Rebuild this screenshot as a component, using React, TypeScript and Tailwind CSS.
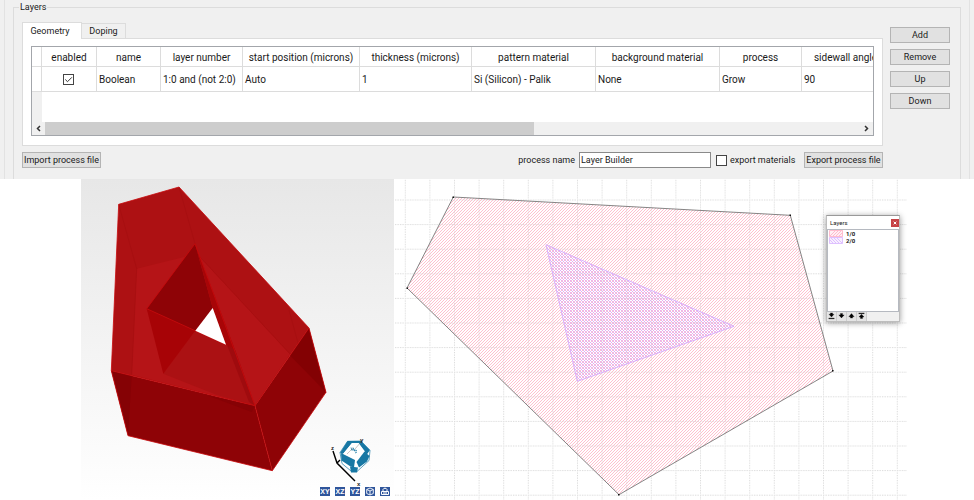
import React, { FC, ReactNode } from "react";
import { clsx } from "clsx";

interface Column {
  title: string;
  value: ReactNode;
  width: string;
}

const columns: Column[] = [
  { title: "name", value: "Boolean", width: "w-[64px]" },
  { title: "layer number", value: "1:0 and (not 2:0)", width: "w-[82px]" },
  { title: "start position (microns)", value: "Auto", width: "w-[117px]" },
  { title: "thickness (microns)", value: "1", width: "w-[112px]" },
  { title: "pattern material", value: "Si (Silicon) - Palik", width: "w-[124px]" },
  { title: "background material", value: "None", width: "w-[124px]" },
  { title: "process", value: "Grow", width: "w-[82px]" },
  { title: "sidewall angle", value: "90", width: "w-[88px]" },
];

const App = () => {
  return (
    <main className="w-full bg-white font-[Roboto,'Noto_Sans',sans-serif] text-[9px] leading-[14px] text-[#1a1a1a]">
      <LayerEditor />
      <div className="grid grid-cols-[81fr_313fr_513fr_67fr]">
        <div className="col-start-2 relative bg-linear-to-b from-[#e7e7e7] to-white">
          <Scene />
          <ViewButtons />
        </div>
        <div className="relative">
          <LayoutCanvas />
          <LayersWindow />
        </div>
      </div>
    </main>
  );
};

const LayerEditor = () => {
  return (
    <section className="bg-[#f0f0f0] px-1">
      <div className="border-x border-[#e2e2e2] px-2">
        <fieldset className="min-w-0 border border-b-0 border-[#dcdcdc] pb-[11px]">
          <legend className="ml-[5px] px-px">Layers</legend>
          <div className="flex gap-[7px] pt-2 pl-2 pr-2.5">
            <div className="min-w-0 grow">
              <div role="tablist" className="flex items-end">
                <button
                  role="tab"
                  aria-selected="true"
                  className="relative -mb-px h-[17px] w-[60px] border border-b-0 border-[#dcdcdc] bg-white pr-1"
                >
                  Geometry
                </button>
                <button
                  role="tab"
                  aria-selected="false"
                  className="h-[15px] w-11 border border-l-0 border-b-0 border-[#dcdcdc] leading-[13px]"
                >
                  Doping
                </button>
              </div>
              <div className="border border-[#dcdcdc] bg-white px-2 pt-[7px] pb-[9px]">
                <LayerTable />
              </div>
              <div className="mt-1.5 flex items-center">
                <PushButton className="w-[79px]">Import process file</PushButton>
                <label htmlFor="process-name" className="ml-auto mr-1">
                  process name
                </label>
                <input
                  id="process-name"
                  type="text"
                  defaultValue="Layer Builder"
                  className="h-4 w-[132px] border border-[#8a8a8a] bg-white px-px outline-none"
                />
                <label className="ml-[5px] mr-2 flex w-20 items-center gap-[3px] whitespace-nowrap">
                  <input
                    type="checkbox"
                    className="size-[11px] shrink-0 appearance-none border border-[#444] bg-white"
                  />
                  export materials
                </label>
                <PushButton className="w-[79px]">Export process file</PushButton>
              </div>
            </div>
            <div className="flex w-[60px] shrink-0 flex-col gap-1.5 pt-[5px]">
              <PushButton>Add</PushButton>
              <PushButton>Remove</PushButton>
              <PushButton>Up</PushButton>
              <PushButton>Down</PushButton>
            </div>
          </div>
        </fieldset>
      </div>
    </section>
  );
};

const PushButton: FC<{ className?: string; children: ReactNode }> = (props) => {
  return (
    <button
      className={clsx(
        "h-4 whitespace-nowrap border border-[#b4b4b4] bg-[#e1e1e1] text-center",
        props.className,
      )}
    >
      {props.children}
    </button>
  );
};

const LayerTable = () => {
  return (
    <div className="border border-[#a3a6ab]">
      <div className="overflow-hidden">
        <table className="w-max table-fixed border-separate border-spacing-0 whitespace-nowrap text-[10px]">
          <thead>
            <tr className="h-5">
              <th className="w-2.5 border-r border-b border-[#dcdcdc] p-0"></th>
              <th className="w-[55px] border-r border-b border-[#dcdcdc] px-0 pt-0.5 pb-0 font-normal">
                enabled
              </th>
              {columns.map((col) => (
                <th
                  key={col.title}
                  className={clsx(
                    "border-r border-b border-[#dcdcdc] px-0 pt-0.5 pb-0 font-normal",
                    col.width,
                  )}
                >
                  {col.title}
                </th>
              ))}
            </tr>
          </thead>
          <tbody>
            <tr className="h-[25px]">
              <td className="border-r border-b border-[#dcdcdc] p-0"></td>
              <td className="border-r border-b border-[#dcdcdc] py-0 pr-0.5 pl-0">
                <span className="relative mx-auto block size-[11px]">
                  <input
                    type="checkbox"
                    aria-label="enabled"
                    defaultChecked
                    className="block size-[11px] appearance-none border border-[#444] bg-white"
                  />
                  <svg
                    viewBox="0 0 11 11"
                    className="pointer-events-none absolute inset-0"
                    fill="none"
                    stroke="#333"
                  >
                    <path d="M2.3 5.5 4.5 7.7 8.9 3.3" />
                  </svg>
                </span>
              </td>
              {columns.map((col) => (
                <td
                  key={col.title}
                  className="border-r border-b border-[#dcdcdc] pt-0.5 pr-0 pb-0 pl-0.5"
                >
                  {col.value}
                </td>
              ))}
            </tr>
          </tbody>
        </table>
      </div>
      <div className="h-[30px]">
        <div className="h-full w-2.5 bg-[#f0f0f0]"></div>
      </div>
      <div className="flex h-[13px] bg-[#f0f0f0]">
        <ScrollArrow label="Scroll left" d="M8 4 5.5 6.5 8 9" />
        <div className="grow">
          <div className="h-full w-3/5 bg-[#cdcdcd]"></div>
        </div>
        <ScrollArrow label="Scroll right" d="M5 4 7.5 6.5 5 9" />
      </div>
    </div>
  );
};

const ScrollArrow: FC<{ label: string; d: string }> = (props) => {
  return (
    <button aria-label={props.label} className="size-[13px]">
      <svg viewBox="0 0 13 13" fill="none" stroke="#333" strokeWidth="1.5">
        <path d={props.d} />
      </svg>
    </button>
  );
};

const Scene = () => {
  return (
    <svg viewBox="0 0 313 321" className="block w-full">
      {/* extruded body */}
      <path d="M37.7 25.3 98 8 228 149 174 226.7 30.3 191.7Z" fill="#ad1113" />
      <path d="M55.7 89.7 107 77 119 78 209 175 174 226.7 50.7 195.7Z" fill="#b51417" />
      <path d="M30.3 191.7 174 226.7 191.3 291.7 47 256.7Z" fill="#8e0306" />
      <path d="M30.3 191.7 50.7 196.7 47 256.7Z" fill="#850205" />
      <path d="M174 226.7 228 149 245 213.3 191.3 291.7Z" fill="#8e0306" />
      <path d="M228 149 245 213.3 209 176.5Z" fill="#830103" />
      <path d="M128 217 174 226.7 170.7 233Z" fill="#860205" />
      <path
        d="M37.7 25.3 55.7 89.7 50.7 195.7M98 8 114 64.7M119 78 209 175M208 131 217 164"
        fill="none"
        stroke="#a30d0f"
        strokeWidth="0.6"
      />

      {/* triangular hole */}
      <path d="M114.3 151.7 154 170.7 174 226.7 136 216 82.3 194.7Z" fill="#ab1113" />
      <path d="M146 166 154 170.7 174 226.7 168 223Z" fill="#9f0b0e" />
      <path d="M65.7 129.7 114.3 151.7 82.3 194.7Z" fill="#a70306" />
      <path d="M114 64.7 65.7 129.7 114.3 151.7 131.7 129Z" fill="#8e0306" />
      <path d="M114 64.7 131.7 129 145 165.7 154 170.7Z" fill="#a80507" />

      <g fill="none" stroke="#c80a0c" strokeWidth="0.8">
        <path d="M37.7 25.3 98 8 228 149 245 213.3 191.3 291.7 47 256.7 30.3 191.7Z" />
        <path d="M30.3 191.7 174 226.7 228 149M174 226.7 191.3 291.7" />
        <path d="M174 226.7 114 64.7 65.7 129.7 145 165.7" />
      </g>
      <path d="M131.7 129 114.3 151.7 145 165.7Z" fill="#fff" />

      {/* orientation cube and axes */}
      <g strokeLinejoin="round">
        <path
          d="M266.5 262.3 280 262 289 271.5 288 281.5 276 292.5 270 292 261 284.5 259 273.5Z"
          fill="#fff"
          stroke="#1878a4"
          strokeWidth="0.7"
        />
        <path d="M266.5 262 280 262 289 271 285.5 276 277.5 264 271 264 262 275 259 274Z" fill="#1878a4" />
        <path d="M271 264 277.5 264 284 272.5 275 282.5 262 275Z" fill="#fff" />
        <path d="M260 274 274 281 273 288.5 269.5 287.5 260.5 281.5Z" fill="#1878a4" />
        <path d="M275.5 283 283.5 272.5 288.5 277 286 282.5 278 288.5Z" fill="#1878a4" />
        <path d="M269 287.5 277 288.5 276 293.5 270 293.5Z" fill="#1878a4" />
        <path
          d="M270 268.5 271 271.5M272 268.5 274 272.5M270 270.5 276 271.5M274 274 276 273"
          fill="none"
          stroke="#1878a4"
          strokeWidth="0.8"
        />
        <path d="M266 275 272 269M274 270 280 263" stroke="#888" strokeWidth="0.5" />
      </g>
      <path
        d="M252 272 256 284 274 302M256 284 259 281"
        fill="none"
        stroke="#000"
        strokeWidth="1.4"
      />
      <g fontSize="6" fontFamily="Liberation Sans, sans-serif" fontWeight="bold" fill="#222">
        <text x="250" y="271">z</text>
        <text x="279" y="263">y</text>
        <text x="276" y="307">x</text>
      </g>
    </svg>
  );
};

const viewButton =
  "flex h-[9px] w-2.5 items-center justify-center bg-[#2f559b] font-['Liberation_Sans',sans-serif] text-[7px] leading-none font-bold text-white";

const ViewButtons = () => {
  return (
    <div className="absolute right-1 bottom-1 flex gap-[5px]">
      <button className={viewButton}>XY</button>
      <button className={viewButton}>XZ</button>
      <button className={viewButton}>YZ</button>
      <button className={viewButton} aria-label="Perspective">
        <svg viewBox="0 0 10 9" fill="none" stroke="#fff" strokeWidth="0.9">
          <path d="M5 1 8.3 2.5V6.5L5 8 1.7 6.5V2.5ZM1.7 2.5 5 4 8.3 2.5M5 4V8" />
        </svg>
      </button>
      <button className={viewButton} aria-label="Lock">
        <svg viewBox="0 0 10 9" fill="none" stroke="#fff">
          <path d="M3 4V2.5L4 1.3H6L7 2.5V4M1.5 4.5H8.5V7.5H1.5ZM3 6H7" />
        </svg>
      </button>
    </div>
  );
};

const LayoutCanvas = () => {
  return (
    <svg viewBox="0 0 513 321" className="block w-full">
      <defs>
        <pattern
          id="grid"
          x="10.8"
          y="20.5"
          width="24.6"
          height="24.6"
          patternUnits="userSpaceOnUse"
        >
          <path
            d="M.5 0V24.6M0 .5H24.6"
            fill="none"
            stroke="#dadada"
            strokeDasharray="1.3 1.16"
          />
        </pattern>
        <pattern id="pink" width="3" height="3" patternUnits="userSpaceOnUse">
          <path
            d="M-1 1 1-1M-1 4 4-1M2 4 4 2"
            stroke="#ffb9ca"
            strokeWidth="0.9"
          />
        </pattern>
        <pattern id="purple" width="3" height="3" patternUnits="userSpaceOnUse">
          <path
            d="M2-1 4 1M-1-1 4 4M-1 2 1 4"
            stroke="#dba9f8"
            strokeWidth="0.9"
          />
        </pattern>
      </defs>
      <path d="M1 0H513V321H1Z" fill="url(#grid)" />
      <path d="M59.3 18 396.3 36.3 439 192 225 315.7 13 109Z" fill="url(#pink)" />
      <path
        d="M59.3 18 396.3 36.3 439 192 225 315.7 13 109Z"
        fill="none"
        stroke="#777"
        strokeWidth="0.9"
      />
      <path
        d="M152 65.7 340 147.3 183.3 202.3Z"
        fill="url(#purple)"
        stroke="#d9b0fb"
      />
      <path
        d="M58.5 17.5h1.5v1.5h-1.5ZM395.5 35.5h1.5v1.5h-1.5ZM438 191h1.5v1.5h-1.5ZM224 315h1.5v1.5h-1.5ZM12.5 108.5h1.5v1.5h-1.5Z"
        fill="#111"
      />
    </svg>
  );
};

const LayersWindow = () => {
  return (
    <div className="absolute top-9 right-[7px] flex h-[107px] w-[74px] flex-col border border-[#bdbdbd] border-t-[#999] bg-[#f0f0f0] text-[6px] leading-[7px] shadow-[0_1px_6px_rgba(0,0,0,0.4)]">
      <div className="flex h-[13px] items-center justify-between bg-white pl-[3px]">
        Layers
        <button aria-label="Close" className="size-2 bg-[#c64346]">
          <svg viewBox="0 0 8 8" stroke="#fff">
            <path d="M2.7 2.7 5.3 5.3M5.3 2.7 2.7 5.3" />
          </svg>
        </button>
      </div>
      <ul className="grow border border-[#b5b9c0] bg-white font-bold">
        <li className="flex items-center gap-[3px] pl-px">
          <svg viewBox="0 0 14 7" className="h-[7px] w-3.5">
            <path
              d="M.5 .5H13.5V6.5H.5ZM1 6 6 1M4 6 9 1M7 6 12 1M10 6 13 3"
              fill="#fff0f4"
              stroke="#ffadc3"
              strokeWidth="0.8"
            />
          </svg>
          1/0
        </li>
        <li className="flex items-center gap-[3px] pl-px">
          <svg viewBox="0 0 14 7" className="h-[7px] w-3.5">
            <path
              d="M.5 .5H13.5V6.5H.5ZM1 3 4 6M2 1 7 6M5 1 10 6M8 1 13 6"
              fill="#f8f0ff"
              stroke="#d7b3ff"
              strokeWidth="0.8"
            />
          </svg>
          2/0
        </li>
      </ul>
      <div className="flex h-[9px]">
        <OrderButton label="Move to bottom" d="M3.8 1H6.2V2.6H7.8L5 5.6 2.2 2.6H3.8ZM2 6.7H8V7.6H2Z" />
        <OrderButton label="Move down" d="M3.8 1.6H6.2V3.2H8L5 6.6 2 3.2H3.8Z" />
        <OrderButton label="Move up" d="M5 1.8 8 5.2H6.2V6.8H3.8V5.2H2Z" />
        <OrderButton label="Move to top" d="M2 1H8V1.9H2ZM5 2.5 7.8 5.5H6.2V7.2H3.8V5.5H2.2Z" />
      </div>
    </div>
  );
};

const OrderButton: FC<{ label: string; d: string }> = (props) => {
  return (
    <button
      aria-label={props.label}
      className="h-[9px] w-2.5 border-r border-[#ccc] bg-[#e4e4e4]"
    >
      <svg viewBox="0 0 10 9" fill="#000" stroke="#000" strokeWidth="0.3">
        <path d={props.d} />
      </svg>
    </button>
  );
};

export default App;
